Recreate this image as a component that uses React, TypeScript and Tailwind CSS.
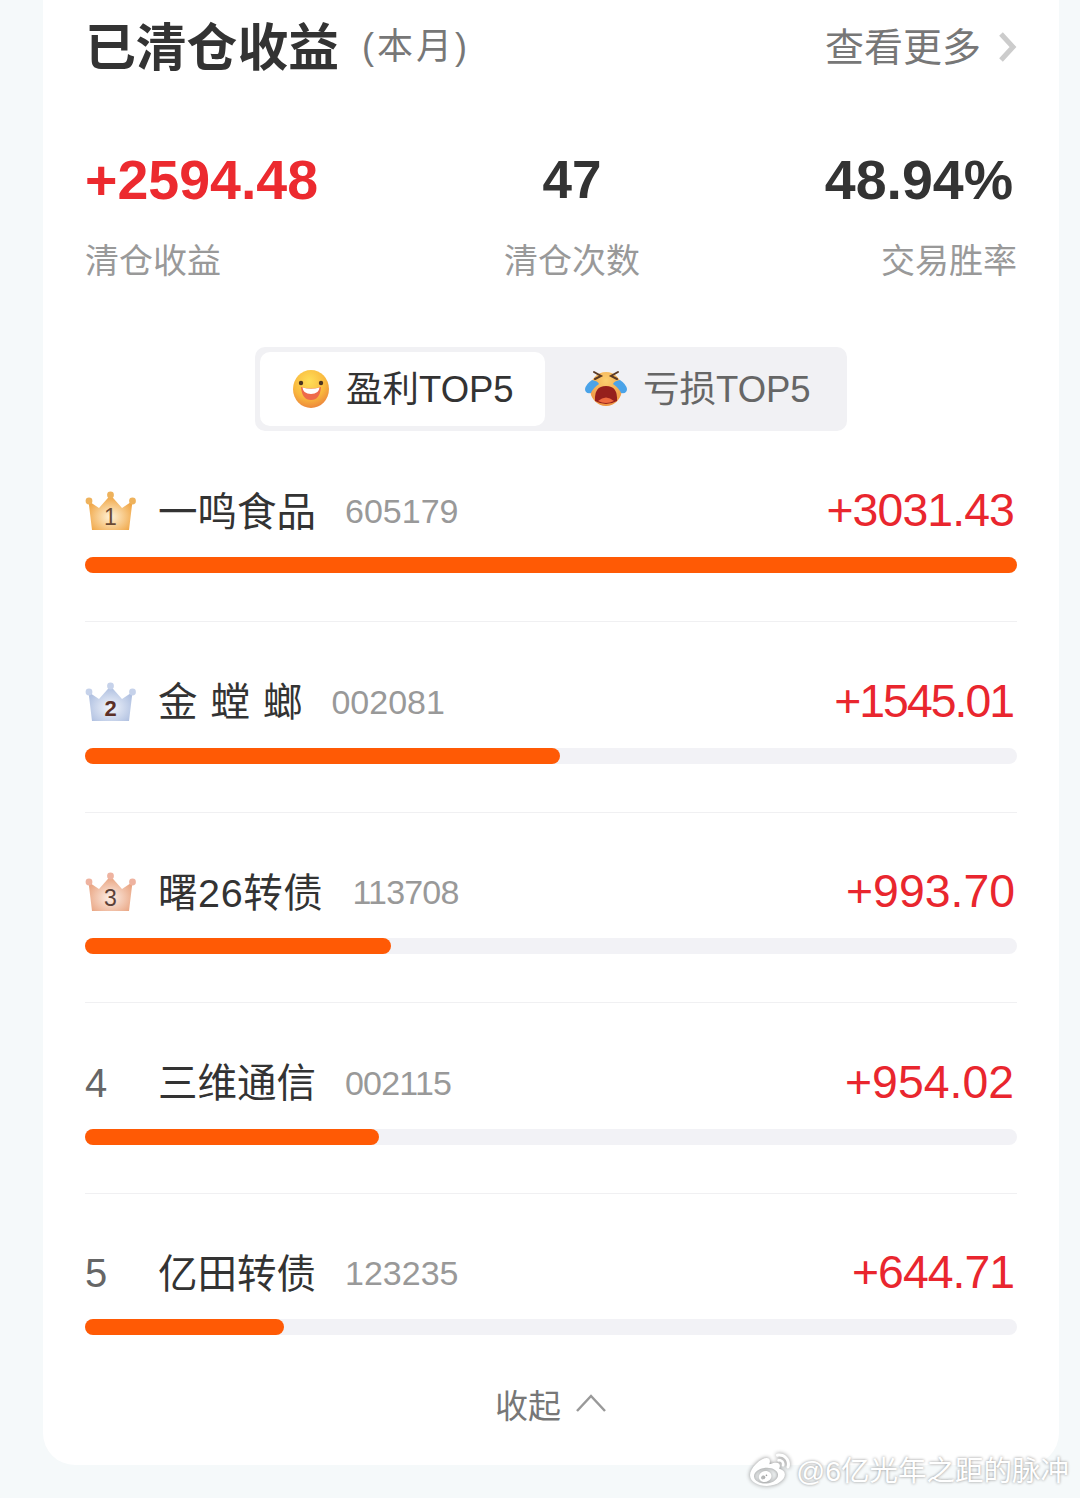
import { FaWeibo } from 'react-icons/fa';

const rows = [
  { rank: 1, name: '一鸣食品', code: '605179', amount: '+3031.43', bar: 'w-full', nameClass: '', codeClass: '', amountClass: 'pr-[3px] tracking-[-0.9px]' },
  { rank: 2, name: '金 螳 螂', code: '002081', amount: '+1545.01', bar: 'w-[475px]', nameClass: '[word-spacing:2px]', codeClass: '', amountClass: 'pr-[4px] tracking-[-2px]' },
  { rank: 3, name: '曙26转债', code: '113708', amount: '+993.70', bar: 'w-[306px]', nameClass: 'tracking-[0.6px]', codeClass: 'tracking-[-0.8px]', amountClass: 'pr-[2px]' },
  { rank: 4, name: '三维通信', code: '002115', amount: '+954.02', bar: 'w-[294px]', nameClass: '', codeClass: 'tracking-[-0.8px]', amountClass: 'pr-[3px]' },
  { rank: 5, name: '亿田转债', code: '123235', amount: '+644.71', bar: 'w-[199px]', nameClass: '', codeClass: '', amountClass: 'pr-[3px] tracking-[-1px]' },
];

const crowns: Record<number, { edge: string; mid: string; ball: string; text: string; weight: number }> = {
  1: { edge: '#f0a544', mid: '#fff3d8', ball: '#eeb25c', text: '#6b4a33', weight: 400 },
  2: { edge: '#aebfe0', mid: '#f3f6fc', ball: '#c6d2ea', text: '#5c3026', weight: 700 },
  3: { edge: '#e9a481', mid: '#fdf0e8', ball: '#eeb3a0', text: '#5b4038', weight: 400 },
};

function Crown({ rank }: { rank: number }) {
  const c = crowns[rank];
  return (
    <svg width="52" height="42" viewBox="0 0 52 42" className="shrink-0">
      <defs>
        <radialGradient id={`crown${rank}`} cx="50%" cy="62%" r="58%">
          <stop offset="0%" stopColor={c.mid} />
          <stop offset="100%" stopColor={c.edge} />
        </radialGradient>
      </defs>
      <path d="M3.5 11 L14 18 L25.5 5 L37 18 L47.5 11 L44 40 L7 40 Z" fill={`url(#crown${rank})`} />
      <circle cx="4" cy="11" r="3.4" fill={c.ball} />
      <circle cx="25.5" cy="5" r="3.4" fill={c.ball} />
      <circle cx="47.5" cy="11" r="3.4" fill={c.ball} />
      <text x="25.5" y="35" textAnchor="middle" fontSize={rank === 2 ? 22 : 23} fontWeight={c.weight} fontFamily="Liberation Sans, sans-serif" fill={c.text}>
        {rank}
      </text>
    </svg>
  );
}

function SmileFace() {
  return (
    <svg width="40" height="40" viewBox="0 0 40 40">
      <defs>
        <radialGradient id="smile" cx="45%" cy="30%" r="75%">
          <stop offset="0%" stopColor="#ffdf58" />
          <stop offset="60%" stopColor="#f9b83e" />
          <stop offset="100%" stopColor="#ea7f3c" />
        </radialGradient>
      </defs>
      <ellipse cx="20" cy="20" rx="18" ry="19" fill="url(#smile)" />
      <circle cx="10" cy="14" r="2.2" fill="#4b3322" />
      <circle cx="30" cy="14" r="2.2" fill="#4b3322" />
      <path d="M10 18 Q20 21 30 18 Q29 31 20 31 Q11 31 10 18 Z" fill="#ee6a4a" />
      <path d="M11.5 18.5 Q20 21 28.5 18.5 Q28 25 20 25 Q12 25 11.5 18.5 Z" fill="#fff" />
    </svg>
  );
}

function CryFace() {
  return (
    <svg width="44" height="40" viewBox="0 0 44 40">
      <defs>
        <radialGradient id="cry" cx="50%" cy="25%" r="75%">
          <stop offset="0%" stopColor="#fcd070" />
          <stop offset="100%" stopColor="#ee9440" />
        </radialGradient>
      </defs>
      <ellipse cx="22" cy="20" rx="16" ry="17" fill="url(#cry)" />
      <path d="M10 3 L17 7 L11 10 M34 3 L27 7 L33 10" fill="none" stroke="#5b3a25" strokeWidth="2" strokeLinecap="round" />
      <path d="M8 11 Q14 12 15 15 Q9 19 7 24 Q1 25 1 20 Q2 15 8 11 Z" fill="#4aa3e8" />
      <path d="M36 11 Q30 12 29 15 Q35 19 37 24 Q43 25 43 20 Q42 15 36 11 Z" fill="#4aa3e8" />
      <path d="M11 32 Q10 17 22 17 Q34 17 33 32 Q22 38 11 32 Z" fill="#96201c" />
      <path d="M14 32 Q22 25 30 32 Q22 36 14 32 Z" fill="#ef6a3f" />
    </svg>
  );
}

export default function App() {
  return (
    <div className="relative h-[1498px] overflow-hidden bg-[#f5f9fa] pl-[43px] pr-[21px] font-['Liberation_Sans','Noto_Sans_CJK_SC',sans-serif]">
      <div className="h-[1465px] rounded-b-[32px] bg-white px-[42px]">
        <div className="flex h-[94px] items-center justify-between">
          <div className="flex items-center">
            <h2 className="pt-[4px] text-[50.8px] font-bold leading-none text-[#333]">已清仓收益</h2>
            <span className="ml-[23px] text-[36px] leading-none tracking-[3px] text-[#777]">(本月)</span>
          </div>
          <div className="flex items-center">
            <span className="text-[39px] leading-none text-[#777]">查看更多</span>
            <svg width="20" height="32" viewBox="0 0 20 32" className="ml-[16px]">
              <path d="M4 3 L16 16 L4 29" fill="none" stroke="#ccc" strokeWidth="5" />
            </svg>
          </div>
        </div>

        <div className="mt-[56px] grid grid-cols-[362px_250px_1fr] font-bold text-[#333]">
          <div className="h-[60px] text-[55.5px] leading-[60px] text-[#ec2a2f]">+2594.48</div>
          <div className="h-[60px] text-center text-[53px] leading-[60px]">47</div>
          <div className="h-[60px] pr-[4px] text-right text-[55.5px] leading-[60px]">48.94%</div>
        </div>
        <div className="mt-[31px] grid grid-cols-[362px_250px_1fr] text-[34px] leading-[40px] text-[#999]">
          <div>清仓收益</div>
          <div className="text-center">清仓次数</div>
          <div className="text-right">交易胜率</div>
        </div>

        <div className="mx-auto mt-[66px] flex h-[84px] w-[592px] rounded-[10px] bg-[#f1f1f4] p-[5px]">
          <div className="flex w-[285px] items-center rounded-[10px] bg-white pl-[31px]">
            <SmileFace />
            <span className="ml-[15px] pt-[2px] text-[36.5px] leading-none text-[#333]">盈利TOP5</span>
          </div>
          <div className="flex flex-1 items-center pl-[39px]">
            <CryFace />
            <span className="ml-[15px] pt-[2px] text-[36.5px] leading-none text-[#666]">亏损TOP5</span>
          </div>
        </div>

        <div className="mt-[50px]">
          {rows.map((row, i) => (
            <div key={row.rank}>
              {i > 0 && <div className="mb-[49.5px] h-px bg-[#f0f0f2]" />}
              <div className="flex h-[60px] items-center">
                <div className="w-[74px] shrink-0 text-[40px] leading-none text-[#666]">
                  {row.rank <= 3 ? <Crown rank={row.rank} /> : row.rank}
                </div>
                <span className={`-ml-[1px] pt-[3px] text-[39.5px] leading-none text-[#333] ${row.nameClass}`}>{row.name}</span>
                <span className={`ml-[29px] text-[34px] leading-none text-[#999] ${row.codeClass}`}>{row.code}</span>
                <span className={`ml-auto pb-[1px] text-[46.4px] leading-none text-[#e9262e] ${row.amountClass}`}>{row.amount}</span>
              </div>
              <div className="mb-[48px] mt-[16px] h-[16px] rounded-full bg-[#f2f2f6]">
                <div className={`h-full rounded-full bg-[#ff5a05] ${row.bar}`} />
              </div>
            </div>
          ))}
        </div>

        <div className="mt-[3px] flex h-[40px] items-center justify-center">
          <span className="pt-[6px] text-[33px] leading-none text-[#777]">收起</span>
          <svg width="32" height="22" viewBox="0 0 32 22" className="ml-[14px]">
            <path d="M2 19 L16 4 L30 19" fill="none" stroke="#999" strokeWidth="2.5" />
          </svg>
        </div>
      </div>

      <div className="absolute bottom-[7px] right-[11px] flex items-center text-[28.5px] leading-none text-white [text-shadow:0_0_3px_#888]">
        <FaWeibo className="mr-[6px] text-[40px] [filter:drop-shadow(0_0_2px_#888)]" />
        <span>@6亿光年之距的脉冲</span>
      </div>
    </div>
  );
}
